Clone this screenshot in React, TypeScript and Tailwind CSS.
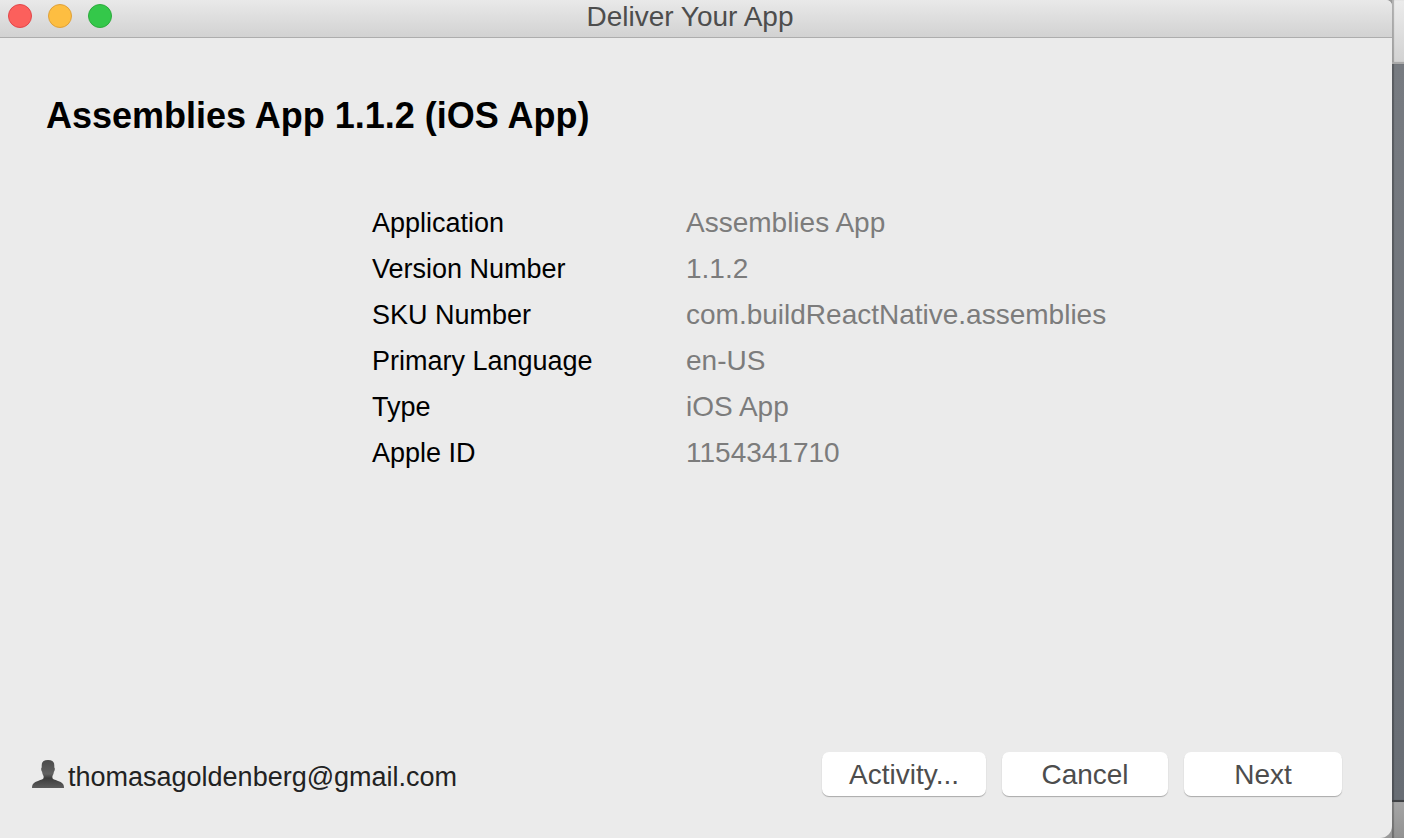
import React from "react";

const details = [
  ["Application", "Assemblies App"],
  ["Version Number", "1.1.2"],
  ["SKU Number", "com.buildReactNative.assemblies"],
  ["Primary Language", "en-US"],
  ["Type", "iOS App"],
  ["Apple ID", "1154341710"],
];

function PersonIcon() {
  return (
    <svg width="32" height="28" viewBox="0 0 32 28" aria-hidden="true">
      <defs>
        <linearGradient id="person" x1="0" y1="0" x2="0" y2="1">
          <stop offset="0" stopColor="#4a4a4a" />
          <stop offset="0.5" stopColor="#626262" />
          <stop offset="0.65" stopColor="#3c3c3c" />
          <stop offset="1" stopColor="#5c5c5c" />
        </linearGradient>
      </defs>
      <path
        fill="url(#person)"
        d="M16 0c4.500 0 6.300 1.800 6.300 5.500v2c.9.600.6 3.300-.4 4.200-.3 2-.8 3.300-1.500 4.300v1.800c0 1.400 2.400 2 5.600 3.100 4 1.400 6 2.600 6 7.100H0c0-4.500 2-5.700 6-7.100 3.200-1.100 5.600-1.700 5.600-3.100V16c-.7-1-1.200-2.300-1.500-4.300-1-.9-1.300-3.600-.4-4.200v-2C9.700 1.800 11.500 0 16 0z"
      />
    </svg>
  );
}

const buttonClass = "h-11 rounded-[7px] bg-white pt-0.5 leading-8 shadow-[0_1px_1px_rgba(0,0,0,0.28)]";

export default function App() {
  return (
    <div className="flex min-h-screen bg-[#999] font-['Liberation_Sans',Arial,sans-serif] text-black">
      <main className="flex flex-1 flex-col rounded-tr-md rounded-br-xl bg-[#ebebeb]">
        <header className="grid h-[38px] grid-cols-[1fr_auto_1fr] items-start rounded-tr-md border-b border-[#adadad] bg-linear-to-b from-[#e9e9e9] to-[#d2d2d2] pr-3">
          <div className="flex gap-4 pt-1 pl-2">
            <button aria-label="Close" className="size-6 rounded-full border border-[#e2464a] bg-[#fc605c]" />
            <button aria-label="Minimize" className="size-6 rounded-full border border-[#dfa13a] bg-[#fdbe41]" />
            <button aria-label="Zoom" className="size-6 rounded-full border border-[#2dab3d] bg-[#34c84a]" />
          </div>
          <p className="text-[28px] leading-[34px] text-[#4d4d4d]">Deliver Your App</p>
        </header>
        <h1 className="px-[46px] pt-[54px] text-[36px] leading-[48px] font-bold">Assemblies App 1.1.2 (iOS App)</h1>
        <dl className="mt-[60px] ml-[372px] leading-[46px]">
          {details.map(([label, value]) => (
            <div key={label} className="grid grid-cols-[314px_1fr] items-baseline">
              <dt className="text-[27px]">{label}</dt>
              <dd className="text-[28px] text-[#7c7c7c]">{value}</dd>
            </div>
          ))}
        </dl>
        <footer className="mt-auto flex items-start justify-between pr-[50px] pb-[42px] pl-8">
          <div className="flex items-start gap-1 pt-2 text-[27px] text-[#222]">
            <PersonIcon />
            <span className="leading-[34px]">thomasagoldenberg@gmail.com</span>
          </div>
          <div className="flex gap-4 text-[28px] text-[#4d4d4d]">
            <button className={`${buttonClass} w-[164px]`}>Activity...</button>
            <button className={`${buttonClass} w-[166px]`}>Cancel</button>
            <button className={`${buttonClass} w-[158px]`}>Next</button>
          </div>
        </footer>
      </main>
      <aside className="flex w-3 flex-col">
        <div className="h-16 border-b-2 border-[#aaa] bg-linear-to-b from-[#ececec] to-[#d2d2d2] shadow-[inset_2px_0_1px_rgba(0,0,0,0.25)]" />
        <div className="flex-1 border-b-2 border-[#3f4144] bg-linear-to-b from-[#777b81] to-[#686d74] shadow-[inset_2px_0_1px_rgba(0,0,0,0.25)]" />
        <div className="h-9 bg-linear-to-b from-[#a5a5a5] to-[#929292] shadow-[inset_2px_0_1px_rgba(0,0,0,0.25)]" />
      </aside>
    </div>
  );
}
